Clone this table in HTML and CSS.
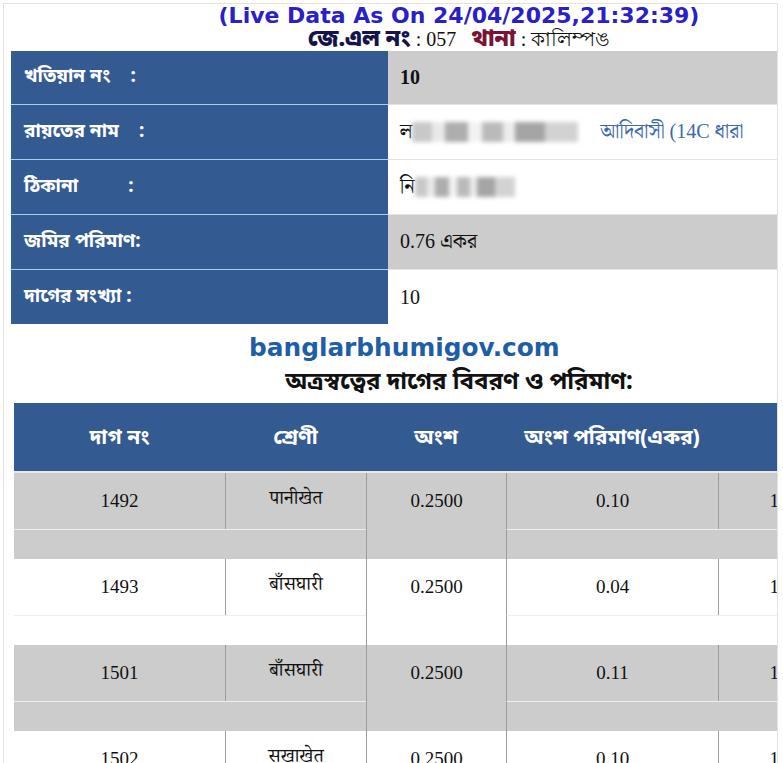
FILE: index.html
```html
<!DOCTYPE html>
<html lang="bn">
<head>
<meta charset="utf-8">
<title>খতিয়ান</title>
<link rel="stylesheet" href="styles.css">
</head>
<body>
<div class="frame">
  <div class="content">
    <div class="live">(Live Data As On 24/04/2025,21:32:39)</div>
    <div class="jl"><b class="jl-label">জে.এল নং</b><span class="jl-val"> : 057 </span><b class="thana">থানা</b><span class="jl-val"> : কালিম্পঙ</span></div>
    <table class="info">
      <tr class="gray first">
        <th>খতিয়ান নং<span class="colon c1">:</span></th>
        <td><b class="num">10</b></td>
      </tr>
      <tr>
        <th>রায়তের নাম<span class="colon c1">:</span></th>
        <td>ল<span class="blur w1"></span><span class="caste">আদিবাসী (14C ধারা</span></td>
      </tr>
      <tr>
        <th>ঠিকানা<span class="colon c3">:</span></th>
        <td>নি<span class="blur w2"></span></td>
      </tr>
      <tr class="gray">
        <th>জমির পরিমাণ:</th>
        <td>0.76 একর</td>
      </tr>
      <tr>
        <th>দাগের সংখ্যা :</th>
        <td>10</td>
      </tr>
    </table>
    <div class="subtitle">অত্রস্বত্বের দাগের বিবরণ ও পরিমাণ:</div>
    <table class="dag">
      <colgroup>
        <col class="k1"><col class="k2"><col class="k3"><col class="k4"><col class="k5">
      </colgroup>
      <thead>
        <tr><th>দাগ নং</th><th>শ্রেণী</th><th>অংশ</th><th>অংশ পরিমাণ(একর)</th><th>খতিয়ান</th></tr>
      </thead>
      <tbody>
        <tr class="g data"><td>1492</td><td>पानीखेत</td><td rowspan="2" class="share">0.2500</td><td>0.10</td><td>1.0000000000</td></tr>
        <tr class="g spacer"><td colspan="2"></td><td colspan="2"></td></tr>
        <tr class="w data"><td>1493</td><td>बाँसघारी</td><td rowspan="2" class="share">0.2500</td><td>0.04</td><td>1.0000000000</td></tr>
        <tr class="w spacer"><td colspan="2"></td><td colspan="2"></td></tr>
        <tr class="g data"><td>1501</td><td>बाँसघारी</td><td rowspan="2" class="share">0.2500</td><td>0.11</td><td>1.0000000000</td></tr>
        <tr class="g spacer"><td colspan="2"></td><td colspan="2"></td></tr>
        <tr class="w data"><td>1502</td><td>सखाखेत</td><td rowspan="2" class="share">0.2500</td><td>0.10</td><td>1.0000000000</td></tr>
        <tr class="w spacer"><td colspan="2"></td><td colspan="2"></td></tr>
      </tbody>
    </table>
  </div>
  <div class="watermark">banglarbhumigov.com</div>
</div>
</body>
</html>
```

FILE: styles.css
```css
html, body {
  margin: 0;
  padding: 0;
  background: #ffffff;
}

body {
  font-family: "Liberation Serif", "Noto Serif Bengali", "Noto Sans Bengali", serif;
  color: #111;
}

.frame {
  position: relative;
  margin: 3px 0 0 3px;
  width: 773px;
  height: 900px;
  border: 1px solid #e2e2e2;
  overflow: hidden;
}

.content {
  width: 910px;
}

.live {
  font-family: "DejaVu Sans", sans-serif;
  font-weight: bold;
  font-size: 22px;
  line-height: 23px;
  height: 23px;
  color: #2a20c8;
  text-align: center;
}

.jl {
  text-align: center;
  font-size: 20px;
  line-height: 24px;
  height: 24px;
}

.jl-label {
  font-family: "Noto Sans Bengali", "Noto Sans", sans-serif;
  font-size: 23px;
  line-height: 24px;
  font-weight: 900;
  color: #14144a;
}

.jl-val {
  font-family: "Liberation Serif", serif;
}

.thana {
  font-family: "Noto Sans Bengali", "Noto Sans", sans-serif;
  font-size: 23px;
  line-height: 24px;
  font-weight: 900;
  color: #7a1234;
  margin-left: 10px;
}

.info {
  margin-left: 7px;
  width: 895px;
  border-collapse: collapse;
  table-layout: fixed;
}

.info th {
  width: 364px;
  background: #345a92;
  color: #ffffff;
  text-align: left;
  font-family: "Noto Sans Bengali", "Noto Sans", sans-serif;
  font-weight: bold;
  font-size: 19px;
  padding: 0 0 0 13px;
  height: 54px;
  border-top: 1px solid #a9cdef;
  white-space: nowrap;
}

.info td {
  font-size: 20px;
  padding: 0 0 0 12px;
  height: 54px;
  border-top: 1px solid #e4e4e4;
  white-space: nowrap;
  overflow: hidden;
}

.info tr.first th,
.info tr.first td {
  border-top: 0;
  height: 53px;
}

.info tr.gray td {
  background: #cccccc;
}

.num {
  font-weight: bold;
}

.colon {
  display: inline-block;
}

.colon.c1 {
  margin-left: 20px;
}

.colon.c3 {
  margin-left: 50px;
}

.blur {
  display: inline-block;
  height: 20px;
  vertical-align: -4px;
  filter: blur(2px);
  background:
    linear-gradient(90deg, #bbb 0 12%, #e4e4e4 12% 20%, #9a9a9a 20% 34%, #f0f0f0 34% 42%, #aaa 42% 55%, #e8e8e8 55% 62%, #8f8f8f 62% 80%, #c8c8c8 80% 100%);
  opacity: 0.8;
}

.blur.w1 {
  width: 166px;
}

.blur.w2 {
  width: 100px;
}

.caste {
  color: #3b69ad;
  margin-left: 22px;
}

.subtitle {
  text-align: center;
  font-family: "Noto Sans Bengali", "Noto Sans", sans-serif;
  font-weight: bold;
  font-size: 24px;
  line-height: 30px;
  margin-top: 44px;
  height: 35px;
}

.dag {
  margin-left: 10px;
  border-collapse: separate;
  border-spacing: 0;
  table-layout: fixed;
  width: 915px;
}

.k1 { width: 211px; }
.k2 { width: 141px; }
.k3 { width: 140px; }
.k4 { width: 212px; }
.k5 { width: 211px; }

.dag thead th {
  height: 64px;
  padding: 4px 0 0;
  background: #345a92;
  color: #ffffff;
  font-family: "Noto Sans Bengali", "Noto Sans", sans-serif;
  font-weight: bold;
  font-size: 21px;
  text-align: center;
  border-bottom: 2px solid #e8e8e8;
  white-space: nowrap;
}

.dag td {
  font-size: 19px;
  text-align: center;
  padding: 0;
}

.dag tr.data td {
  height: 56px;
  border-left: 1px solid #9c9c9c;
  font-family: "Liberation Serif", "Noto Serif Devanagari", serif;
}

.dag tr.data td:first-child {
  border-left: 0;
}

.dag td.share {
  vertical-align: top;
  padding-top: 17px;
  height: auto;
}

.dag tr.spacer td {
  height: 29px;
  border-top: 1px solid #eeeeee;
}

.dag tr.spacer td:last-child {
  border-left: 1px solid #9c9c9c;
}

.dag tr.g td {
  background: #cccccc;
}

.dag tr.w td {
  background: #ffffff;
}

.watermark {
  position: absolute;
  left: 245px;
  top: 329px;
  font-family: "DejaVu Sans", sans-serif;
  font-weight: bold;
  font-size: 24.8px;
  color: #1f5ea6;
}
```
